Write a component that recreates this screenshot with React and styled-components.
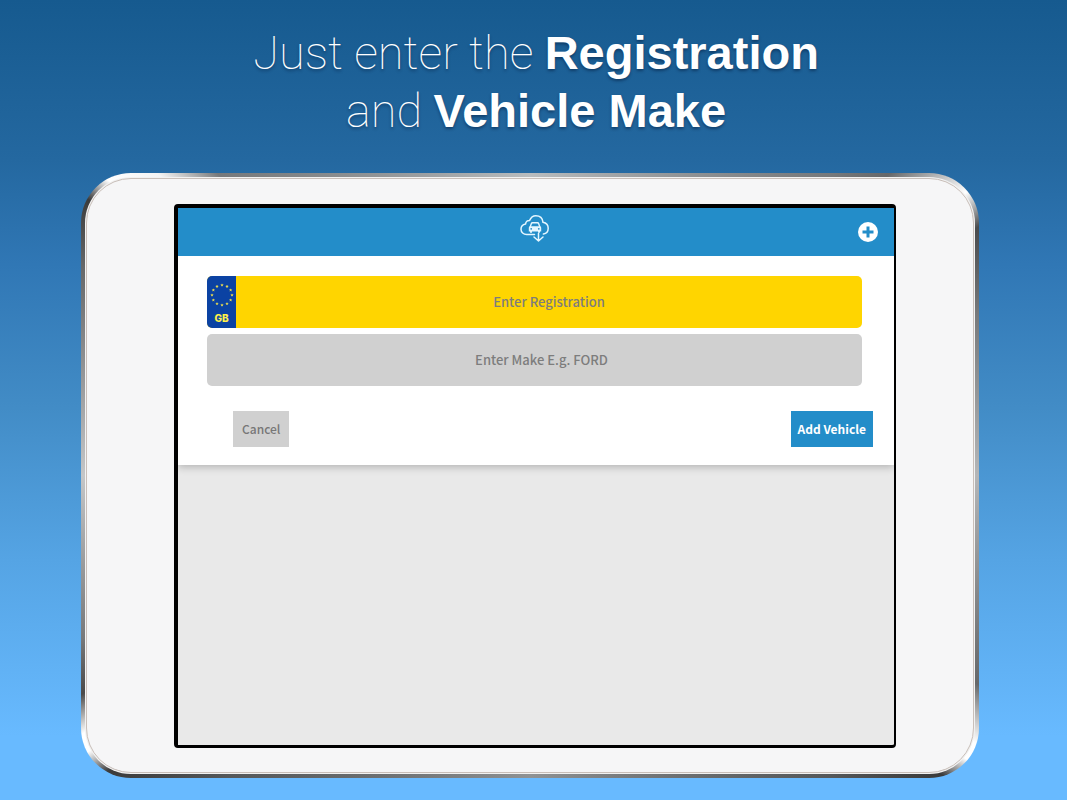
import { useState } from 'react';
import styled, { createGlobalStyle } from 'styled-components';

const colors = {
    blue: '#238dc9',
    yellow: '#ffd500',
    grey: '#d0d0d0',
    text: '#7d7d7d',
    euBlue: '#0b42a3',
};

const appFont = `"Noto Sans CJK JP", "Noto Sans CJK SC", "Open Sans", sans-serif`;

const CloudCarIcon = () => (
    <svg width="32" height="30" viewBox="0 0 32 30" fill="none" stroke="#e4f6ff" strokeWidth="1.5" strokeLinecap="round" strokeLinejoin="round" aria-hidden="true">
        <path d="M14.500 20.500H6.700C3.500 20.500 1 18.200 1 15.200c0-2.700 1.900-4.900 4.600-5.300.1-2.200 1.800-3.700 4-3.500C10.800 3.500 13 1.700 15.800 1.700c4 0 6.800 2.700 7.200 6.600 3 .6 5.200 2.900 5.200 5.900 0 3-2 5.300-4.800 5.900" />
        <path d="M18.500 19.500v7.300M14 23l4.500 4 4.500-4" />
        <path d="M10.300 12.500l1-2.800c.2-.6.6-.9 1.200-.9h5c.6 0 1 .3 1.200.9l1 2.800" strokeWidth="1.400" />
        <path d="M9.900 12.300h10.200c.7.300 1.100.8 1.100 1.500v3.700h-1.200v1.300h-2v-1.300h-6v1.300h-2v-1.300H8.800v-3.700c0-.7.400-1.200 1.100-1.500z" fill="#e4f6ff" stroke="none" />
        <circle cx="11.200" cy="14.800" r="0.900" fill={colors.blue} stroke="none" />
        <circle cx="18.800" cy="14.800" r="0.900" fill={colors.blue} stroke="none" />
    </svg>
);

const PlusIcon = () => (
    <svg width="20" height="20" viewBox="0 0 20 20" aria-hidden="true">
        <circle cx="10" cy="10" r="10" fill="#ffffff" />
        <path d="M10 4.500v11M4.500 10h11" stroke={colors.blue} strokeWidth="3" />
    </svg>
);

const STAR = 'M0-1.600L.5-.5 1.700-.45.75.3 1.050 1.450 0 .8-1.050 1.450-.75.3-1.700-.45-.5-.5z';

const StarsIcon = () => (
    <svg width="24" height="24" viewBox="-12 -12 24 24" fill="#f3e24c" aria-hidden="true">
        {Array.from({ length: 12 }, (_, i) => {
            const angle = (i * Math.PI) / 6;
            return <path key={i} d={STAR} transform={`translate(${10 * Math.sin(angle)} ${-10 * Math.cos(angle)})`} />;
        })}
    </svg>
);

const App = () => {
    const [registration, setRegistration] = useState('');
    const [make, setMake] = useState('');

    const resetHandler = () => {
        setRegistration('');
        setMake('');
    };

    return (
        <Page>
            <GlobalStyle />
            <Title>
                Just enter the <strong>Registration</strong>
                <br />
                and <strong>Vehicle Make</strong>
            </Title>
            <Tablet>
                <Bezel>
                    <Screen>
                        <Header>
                            <CloudCarIcon />
                            <HeaderButton type="button" aria-label="Add"><PlusIcon /></HeaderButton>
                        </Header>
                        <Form onSubmit={(e) => e.preventDefault()}>
                            <Field $color={colors.yellow}>
                                <Country>
                                    <StarsIcon />
                                    <span>GB</span>
                                </Country>
                                <Input
                                    aria-label="Registration"
                                    placeholder="Enter Registration"
                                    value={registration}
                                    onChange={(e) => setRegistration(e.target.value)}
                                />
                            </Field>
                            <Field $color={colors.grey} $indent="14px">
                                <Input
                                    aria-label="Make"
                                    placeholder="Enter Make E.g. FORD"
                                    value={make}
                                    onChange={(e) => setMake(e.target.value)}
                                />
                            </Field>
                            <Actions>
                                <Button type="button" onClick={resetHandler}>Cancel</Button>
                                <Button type="submit" $primary>Add Vehicle</Button>
                            </Actions>
                        </Form>
                    </Screen>
                </Bezel>
            </Tablet>
        </Page>
    );
};

export default App;

const GlobalStyle = createGlobalStyle`
* {
    box-sizing: border-box;
}

body {
    margin: 0;
}
`

const Page = styled.main`
    min-height: 100vh;
    display: flex;
    flex-direction: column;
    padding: 24px 88px 22px 81px;
    background: linear-gradient(#165a8f, #2468a0 20%, #3077b5 33%, #428cc6 51%, #55a4e4 70%, #68baff 92%);
`

const Title = styled.h1`
    margin: 0 0 33px 12px;
    text-align: center;
    color: #ffffff;
    font-family: Roboto, "Liberation Sans", sans-serif;
    font-size: 47px;
    line-height: 58px;
    font-weight: 100;
    text-shadow: 0 2px 3px rgba(0, 20, 50, 0.45);

    & strong {
        font-family: "Liberation Sans", Arial, sans-serif;
        line-height: 1;
        font-weight: 700;
    }
`

const Tablet = styled.section`
    flex: 1;
    display: flex;
    padding: 5px;
    border-radius: 50px;
    background: conic-gradient(
        #b9bcbe 0deg,
        #77797b 45deg,
        #66686a 50deg,
        #ffffff 57deg,
        #4a4c4e 61deg,
        #77797b 70deg,
        #b4b6b8 90deg,
        #66686a 115deg,
        #ffffff 121deg,
        #ffffff 123deg,
        #3b3b3b 126deg,
        #55585a 135deg,
        #8f9294 180deg,
        #55585a 225deg,
        #3b3b3b 235deg,
        #ffffff 238deg,
        #ffffff 240deg,
        #4a4a4a 244deg,
        #77797b 250deg,
        #c4c6c8 270deg,
        #66686a 295deg,
        #3b3b3b 302deg,
        #ffffff 305deg,
        #f4f4f4 309deg,
        #77797b 314deg,
        #b9bcbe 360deg
    );
`

const Bezel = styled.div`
    flex: 1;
    display: flex;
    padding: 25px 77px 24px 87px;
    border: 1px solid #c9bfb9;
    border-radius: 45px;
    background: #f6f6f7;
    box-shadow: 0 0 0 1px #f2f2f2;
`

const Screen = styled.div`
    flex: 1;
    display: flex;
    flex-direction: column;
    border: solid #000000;
    border-width: 4px 2px 3px 4px;
    border-radius: 4px;
    background: #e9e9e9;
    font-family: ${appFont};
`

const Header = styled.header`
    display: grid;
    grid-template-columns: 1fr auto 1fr;
    align-items: center;
    height: 48px;
    padding: 0 16px;
    background: ${colors.blue};

    & > svg {
        grid-column: 2;
        margin-bottom: 6px;
    }
`

const HeaderButton = styled.button`
    justify-self: end;
    display: flex;
    padding: 0;
    border: 0;
    background: none;
    cursor: pointer;
`

const Form = styled.form`
    display: flex;
    flex-direction: column;
    gap: 6px;
    padding: 20px 32px 18px 29px;
    background: #ffffff;
    box-shadow: 0 2px 8px rgba(0, 0, 0, 0.24);
    clip-path: inset(0 0 -12px 0);
`

const Field = styled.div`
    display: flex;
    height: 52px;
    padding-left: ${p => p.$indent || 0};
    overflow: hidden;
    border-radius: 5px;
    background: ${p => p.$color};
`

const Country = styled.div`
    width: 29px;
    flex-shrink: 0;
    display: flex;
    flex-direction: column;
    align-items: center;
    padding-top: 7px;
    background: ${colors.euBlue};
    color: #fff04a;
    font: 800 10px/12px Inter, sans-serif;

    & span {
        margin-top: 5px;
    }
`

const Input = styled.input`
    flex: 1;
    min-width: 0;
    padding: 0;
    border: 0;
    background: none;
    color: ${colors.text};
    text-align: center;
    font: 500 13px/20px ${appFont};

    &::placeholder {
        color: ${colors.text};
        opacity: 1;
    }
`

const Actions = styled.div`
    display: flex;
    justify-content: space-between;
    margin: 19px -11px 0 26px;
`

const Button = styled.button`
    height: 36px;
    padding: 0 ${p => p.$primary ? '7px' : '9px'};
    border: 0;
    background: ${p => p.$primary ? colors.blue : colors.grey};
    color: ${p => p.$primary ? '#ffffff' : '#777777'};
    font: ${p => p.$primary ? 700 : 500} 12px/20px ${appFont};
    cursor: pointer;
`
